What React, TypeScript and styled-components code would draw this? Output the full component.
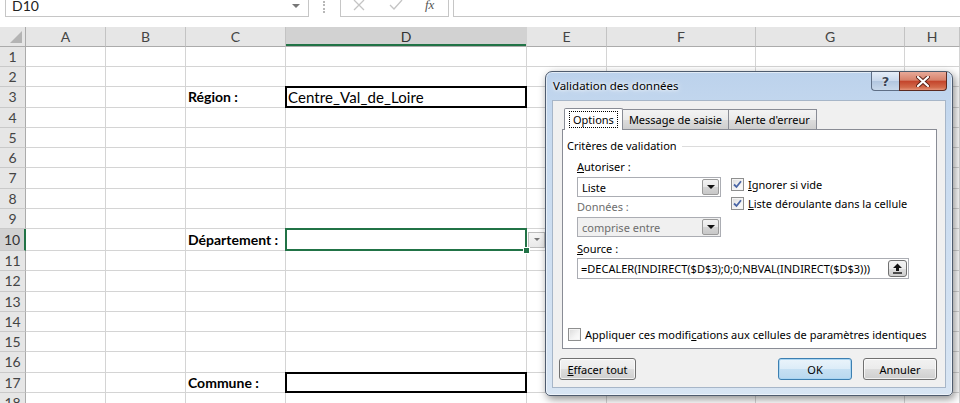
import React from "react";
import styled, { createGlobalStyle, css } from "styled-components";

const sheetFont = `"Lato", "Liberation Sans", sans-serif`;
const uiFont = `"Noto Sans", "Liberation Sans", sans-serif`;

const GlobalStyle = createGlobalStyle`
  html, body {
    margin: 0;
    padding: 0;
    background: #fff;
  }
  body {
    overflow: hidden;
  }
  #root {
    width: 960px;
    height: 403px;
  }
`;

type Column = { id: string; selected?: boolean };

const columns: Column[] = [
  { id: "A" },
  { id: "B" },
  { id: "C" },
  { id: "D", selected: true },
  { id: "E" },
  { id: "F" },
  { id: "G" },
  { id: "H" },
];

type Row = {
  n: number;
  height: number;
  label?: string;
  value?: string;
  frame?: "box" | "active";
};

const rows: Row[] = [
  { n: 1, height: 20 },
  { n: 2, height: 20.25 },
  { n: 3, height: 20.25, label: "Région :", value: "Centre_Val_de_Loire", frame: "box" },
  { n: 4, height: 20.25 },
  { n: 5, height: 20.25 },
  { n: 6, height: 20.25 },
  { n: 7, height: 20.25 },
  { n: 8, height: 20.25 },
  { n: 9, height: 20.25 },
  { n: 10, height: 22, label: "Département :", frame: "active" },
  { n: 11, height: 20.25 },
  { n: 12, height: 20.25 },
  { n: 13, height: 20.25 },
  { n: 14, height: 20.25 },
  { n: 15, height: 20.25 },
  { n: 16, height: 20.25 },
  { n: 17, height: 20.25, label: "Commune :", frame: "box" },
  { n: 18, height: 20.25 },
];

export default function App() {
  return (
    <Screen>
      <GlobalStyle />
      <FormulaBar>
        <NameBox>
          D10
          <NameArrow />
        </NameBox>
        <Grip />
        <FnBox>
          <svg width="12" height="12" viewBox="0 0 12 12">
            <path d="M1 1 L11 11 M11 1 L1 11" stroke="#c4c4c4" strokeWidth="1.3" />
          </svg>
          <svg width="14" height="12" viewBox="0 0 14 12">
            <path d="M1 6 L5 10 L13 1" stroke="#c4c4c4" strokeWidth="1.3" fill="none" />
          </svg>
          <Fx>fx</Fx>
        </FnBox>
        <FormulaInput />
      </FormulaBar>

      <Sheet>
        <Corner />
        {columns.map((c) => (
          <ColHeader key={c.id} $selected={c.selected}>
            {c.id}
          </ColHeader>
        ))}
        {rows.map((r) => (
          <React.Fragment key={r.n}>
            <RowHeader style={{ height: r.height }} $selected={r.frame === "active"}>
              {r.n}
            </RowHeader>
            <Cell />
            <Cell />
            <Cell $bold>{r.label}</Cell>
            <Cell $frame={r.frame}>{r.value}</Cell>
            <Cell>{r.frame === "active" && <CellDropButton />}</Cell>
            <Cell />
            <Cell />
            <Cell />
          </React.Fragment>
        ))}
      </Sheet>

      <Dialog>
        <TitleBar>
          <Title>Validation des données</Title>
          <CaptionButtons>
            <HelpButton>?</HelpButton>
            <CloseButton>
              <svg width="14" height="11" viewBox="0 0 14 11">
                <path
                  d="M2 1 L12 10 M12 1 L2 10"
                  stroke="#5a2116"
                  strokeWidth="4"
                  strokeLinecap="round"
                />
                <path
                  d="M2 1 L12 10 M12 1 L2 10"
                  stroke="#fff"
                  strokeWidth="2.2"
                  strokeLinecap="round"
                />
              </svg>
            </CloseButton>
          </CaptionButtons>
        </TitleBar>

        <Client>
          <TabList>
            <Tab $active>
              <FocusText>Options</FocusText>
            </Tab>
            <Tab>Message de saisie</Tab>
            <Tab>Alerte d'erreur</Tab>
          </TabList>

          <Panel>
            <GroupHeader>
              <span>Critères de validation</span>
              <GroupLine />
            </GroupHeader>

            <Criteria>
              <LeftColumn>
                <FieldLabel>
                  <Accel>A</Accel>utoriser :
                </FieldLabel>
                <Combo>
                  <span>Liste</span>
                  <ComboButton />
                </Combo>
                <FieldLabel $disabled>Données :</FieldLabel>
                <Combo $disabled>
                  <span>comprise entre</span>
                  <ComboButton />
                </Combo>
              </LeftColumn>
              <RightColumn>
                <CheckRow>
                  <CheckBox checked />
                  <span>
                    <Accel>I</Accel>gnorer si vide
                  </span>
                </CheckRow>
                <CheckRow>
                  <CheckBox checked />
                  <span>
                    <Accel>L</Accel>iste déroulante dans la cellule
                  </span>
                </CheckRow>
              </RightColumn>
            </Criteria>

            <SourceBlock>
              <FieldLabel>
                <Accel>S</Accel>ource :
              </FieldLabel>
              <SourceInput>
                <span>=DECALER(INDIRECT($D$3);0;0;NBVAL(INDIRECT($D$3)))</span>
                <CollapseButton>
                  <svg width="11" height="11" viewBox="0 0 11 11">
                    <path d="M5.5 0.5 L10 5 L7 5 L7 8 L4 8 L4 5 L1 5 Z" fill="#111" />
                    <rect x="1" y="9.3" width="9" height="1.4" fill="#111" />
                  </svg>
                </CollapseButton>
              </SourceInput>
            </SourceBlock>

            <ApplyRow>
              <CheckBox />
              <span>
                Appliquer ces modifi<Accel>c</Accel>ations aux cellules de paramètres identiques
              </span>
            </ApplyRow>
          </Panel>

          <ButtonRow>
            <PushButton $width={77}>
              <Accel>E</Accel>ffacer tout
            </PushButton>
            <Spacer />
            <PushButton $width={74} $default>
              OK
            </PushButton>
            <PushButton $width={74}>Annuler</PushButton>
          </ButtonRow>
        </Client>
      </Dialog>
    </Screen>
  );
}

function CheckBox({ checked }: { checked?: boolean }) {
  return (
    <CheckFrame>
      {checked && (
        <svg width="9" height="9" viewBox="0 0 9 9">
          <path d="M1 4.5 L3.5 7 L8 1.2" stroke="#4a66a6" strokeWidth="1.8" fill="none" />
        </svg>
      )}
    </CheckFrame>
  );
}

const Screen = styled.div`
  position: relative;
  width: 960px;
  height: 403px;
  overflow: hidden;
  background: #fff;
  font-family: ${sheetFont};
`;

/* ---------- formula bar ---------- */

const FormulaBar = styled.div`
  height: 27px;
  display: flex;
  align-items: flex-start;
  background: #fff;
`;

const NameBox = styled.div`
  position: relative;
  box-sizing: border-box;
  margin: -7px 0 0 5px;
  width: 304px;
  height: 24px;
  border: 1px solid #c6c6c6;
  display: flex;
  align-items: center;
  padding-left: 6px;
  font-size: 14px;
  color: #222;
`;

const NameArrow = styled.span`
  position: absolute;
  right: 8px;
  top: 10px;
  border-left: 4px solid transparent;
  border-right: 4px solid transparent;
  border-top: 4px solid #777;
`;

const Grip = styled.div`
  margin: 1px 0 0 14px;
  width: 0;
  height: 12px;
  border-left: 2px dotted #b8b8b8;
`;

const FnBox = styled.div`
  box-sizing: border-box;
  margin: -7px 0 0 15px;
  width: 109px;
  height: 24px;
  border: 1px solid #c6c6c6;
  display: flex;
  align-items: center;
  padding: 0 0 0 12px;
  gap: 24px;
`;

const Fx = styled.span`
  font-family: "Liberation Serif", serif;
  font-style: italic;
  font-size: 13px;
  color: #555;
  margin-left: -2px;
`;

const FormulaInput = styled.div`
  box-sizing: border-box;
  margin: -7px 0 0 4px;
  flex: 1;
  height: 24px;
  border: 1px solid #c6c6c6;
  border-right: none;
`;

/* ---------- sheet ---------- */

const Sheet = styled.div`
  display: grid;
  grid-template-columns: 26px 80px 80px 100px 241px 80px 149px 149px 1fr;
  grid-auto-rows: auto;
`;

const Corner = styled.div`
  position: relative;
  height: 20px;
  box-sizing: border-box;
  background: #e6e6e6;
  border-right: 1px solid #ababab;
  border-bottom: 1px solid #ababab;

  &::after {
    content: "";
    position: absolute;
    right: 3px;
    bottom: 3px;
    border-left: 12px solid transparent;
    border-bottom: 12px solid #b4b4b4;
  }
`;

const ColHeader = styled.div<{ $selected?: boolean }>`
  box-sizing: border-box;
  height: 20px;
  background: #e6e6e6;
  border-right: 1px solid #c3c3c3;
  border-bottom: 1px solid #ababab;
  display: flex;
  align-items: center;
  justify-content: center;
  font-size: 14px;
  color: #444;
  ${(p) =>
    p.$selected &&
    css`
      background: #d2d2d2;
      color: #333;
      border-right-color: #d2d2d2;
      box-shadow: inset 0 -2px 0 #217346;
    `}
`;

const RowHeader = styled.div<{ $selected?: boolean }>`
  box-sizing: border-box;
  background: #e6e6e6;
  border-right: 1px solid #ababab;
  border-bottom: 1px solid #c9c9c9;
  display: flex;
  align-items: center;
  justify-content: center;
  font-size: 14px;
  color: #444;
  ${(p) =>
    p.$selected &&
    css`
      background: #d2d2d2;
      color: #333;
      border-right: 2px solid #217346;
    `}
`;

const Cell = styled.div<{ $bold?: boolean; $frame?: "box" | "active" }>`
  position: relative;
  box-sizing: border-box;
  border-right: 1px solid #d4d4d4;
  border-bottom: 1px solid #d4d4d4;
  display: flex;
  align-items: center;
  padding: 0 2px;
  font-size: ${(p) => (p.$bold ? "14px" : "15px")};
  letter-spacing: ${(p) => (p.$bold ? "0" : "0.1px")};
  color: #000;
  white-space: nowrap;
  font-weight: ${(p) => (p.$bold ? 700 : 400)};

  ${(p) =>
    p.$frame &&
    css`
      &::after {
        content: "";
        position: absolute;
        left: -1px;
        top: -1px;
        right: -1px;
        bottom: -1px;
        border: 2px solid ${p.$frame === "box" ? "#000" : "#217346"};
        z-index: 2;
        pointer-events: none;
      }
    `}

  ${(p) =>
    p.$frame === "active" &&
    css`
      &::before {
        content: "";
        position: absolute;
        right: -4px;
        bottom: -4px;
        width: 5px;
        height: 5px;
        background: #217346;
        border: 1px solid #fff;
        z-index: 3;
      }
    `}
`;

const CellDropButton = styled.div`
  box-sizing: border-box;
  margin-left: -1px;
  width: 17px;
  height: 16px;
  border: 1px solid #bdbdbd;
  background: linear-gradient(180deg, #f7f7f7, #e9e9e9);
  display: flex;
  align-items: center;
  justify-content: center;

  &::after {
    content: "";
    border-left: 3px solid transparent;
    border-right: 3px solid transparent;
    border-top: 3px solid #777;
  }
`;

/* ---------- dialog ---------- */

const Dialog = styled.div`
  position: absolute;
  left: 545px;
  top: 71px;
  width: 408px;
  height: 325px;
  box-sizing: border-box;
  border: 1px solid #4f5c6e;
  border-radius: 7px 7px 5px 5px;
  background: linear-gradient(180deg, #bcd2ec 0%, #c7daef 18%, #cfdff1 60%, #d8e5f3 100%);
  box-shadow: inset 0 0 0 1px rgba(255, 255, 255, 0.55), 2px 3px 9px rgba(0, 0, 0, 0.45);
  padding: 0 6px;
  display: flex;
  flex-direction: column;
  font-family: ${uiFont};
  font-size: 11px;
  color: #000;
`;

const TitleBar = styled.div`
  height: 28px;
  display: flex;
  align-items: flex-start;
`;

const Title = styled.div`
  padding: 6px 0 0 1px;
  line-height: 16px;
  font-size: 11.5px;
  text-shadow: 0 0 6px #fff, 0 0 3px #fff;
`;

const CaptionButtons = styled.div`
  margin: 0 -1px 0 auto;
  display: flex;
  height: 19px;
`;

const HelpButton = styled.div`
  box-sizing: border-box;
  width: 28px;
  height: 19px;
  border: 1px solid #5f6f86;
  border-top: none;
  border-right: none;
  border-radius: 0 0 0 4px;
  background: linear-gradient(180deg, #e6eef8 0%, #c9d8ec 48%, #b2c6df 52%, #c8d8ea 100%);
  display: flex;
  align-items: center;
  justify-content: center;
  font-family: "DejaVu Sans", sans-serif;
  font-weight: 700;
  font-size: 13px;
  color: #3a4454;
  text-shadow: 0 0 2px #fff;
`;

const CloseButton = styled.div`
  box-sizing: border-box;
  width: 48px;
  height: 19px;
  border: 1px solid #5b2a20;
  border-top: none;
  border-radius: 0 0 4px 0;
  background: linear-gradient(180deg, #e7a998 0%, #d7826c 45%, #c4452c 52%, #d26a4b 85%, #e4947a 100%);
  display: flex;
  align-items: center;
  justify-content: center;
`;

const Client = styled.div`
  box-sizing: border-box;
  height: 288px;
  background: #f0f0f0;
  border: 1px solid #a7b6c8;
  display: flex;
  flex-direction: column;
  padding-top: 7px;
`;

const TabList = styled.div`
  display: flex;
  align-items: flex-end;
  height: 22px;
  margin: 0 0 -1px 11px;
  position: relative;
  z-index: 1;
`;

const Tab = styled.div<{ $active?: boolean }>`
  box-sizing: border-box;
  height: 20px;
  margin-bottom: 1px;
  padding: 0 6px;
  border: 1px solid #898c95;
  border-bottom: none;
  border-left-width: 0;
  background: linear-gradient(180deg, #f3f3f3 0%, #ebebeb 50%, #dddddd 51%, #cfcfcf 100%);
  display: flex;
  align-items: center;
  white-space: nowrap;

  ${(p) =>
    p.$active &&
    css`
      height: 22px;
      margin-bottom: 0;
      border-left-width: 1px;
      border-radius: 2px 2px 0 0;
      background: #fff;
      padding: 0 4px;
    `}
`;

const FocusText = styled.span`
  border: 1px dotted #000;
  padding: 0 3px;
  line-height: 15px;
`;

const Panel = styled.div`
  box-sizing: border-box;
  margin: 0 8px 0 9px;
  height: 220px;
  background: #fff;
  border: 1px solid #898c95;
  display: flex;
  flex-direction: column;
  padding: 8px 6px 6px 4px;
`;

const GroupHeader = styled.div`
  display: flex;
  align-items: center;
  gap: 5px;
  height: 16px;
  line-height: 16px;
`;

const GroupLine = styled.div`
  flex: 1;
  height: 1px;
  background: #dcdcdc;
`;

const Criteria = styled.div`
  display: flex;
  margin: 5px 0 0 10px;
`;

const LeftColumn = styled.div`
  width: 144px;
  display: flex;
  flex-direction: column;
`;

const FieldLabel = styled.div<{ $disabled?: boolean }>`
  height: 16px;
  line-height: 16px;
  color: ${(p) => (p.$disabled ? "#6d6d6d" : "#000")};
  & + div {
    margin-top: 2px;
  }
`;

const Combo = styled.div<{ $disabled?: boolean }>`
  box-sizing: border-box;
  height: 20px;
  border: 1px solid #abadb3;
  background: ${(p) => (p.$disabled ? "#f0f0f0" : "#fff")};
  color: ${(p) => (p.$disabled ? "#6d6d6d" : "#000")};
  display: flex;
  align-items: center;
  padding: 0 1px 0 4px;
  & + div {
    margin-top: 2px;
  }
  & > span {
    flex: 1;
  }
`;

const ComboButton = styled.div`
  box-sizing: border-box;
  width: 17px;
  height: 16px;
  border: 1px solid #9a9a9a;
  border-radius: 2px;
  background: linear-gradient(180deg, #f2f2f2 0%, #e8e8e8 50%, #d4d4d4 51%, #c8c8c8 100%);
  display: flex;
  align-items: center;
  justify-content: center;

  &::after {
    content: "";
    border-left: 4px solid transparent;
    border-right: 4px solid transparent;
    border-top: 4px solid #111;
  }
`;

const RightColumn = styled.div`
  margin-left: 10px;
  padding-top: 16px;
  display: flex;
  flex-direction: column;
  gap: 1px;
`;

const CheckRow = styled.div`
  height: 18px;
  display: flex;
  align-items: center;
  gap: 4px;
  white-space: nowrap;
`;

const CheckFrame = styled.span`
  box-sizing: border-box;
  width: 13px;
  height: 13px;
  flex: none;
  border: 1px solid #8e8f8f;
  background: linear-gradient(135deg, #dadada 0%, #f4f4f4 60%, #fdfdfd 100%);
  box-shadow: inset 0 0 0 1px #f4f4f4;
  display: inline-flex;
  align-items: center;
  justify-content: center;
`;

const SourceBlock = styled.div`
  margin: 4px 0 0 10px;
  display: flex;
  flex-direction: column;
  & > div + div {
    margin-top: 1px;
  }
`;

const SourceInput = styled.div`
  box-sizing: border-box;
  width: 332px;
  height: 21px;
  border: 1px solid #abadb3;
  display: flex;
  align-items: center;
  padding: 0 1px 0 3px;
  white-space: nowrap;
  & > span {
    flex: 1;
    overflow: hidden;
  }
`;

const CollapseButton = styled.div`
  box-sizing: border-box;
  width: 19px;
  height: 17px;
  border: 1px solid #707070;
  border-radius: 3px;
  background: linear-gradient(180deg, #f2f2f2 0%, #ebebeb 50%, #dddddd 51%, #cfcfcf 100%);
  display: flex;
  align-items: center;
  justify-content: center;
`;

const ApplyRow = styled.div`
  margin: auto 0 0 1px;
  height: 16px;
  display: flex;
  align-items: center;
  gap: 4px;
  white-space: nowrap;
`;

const ButtonRow = styled.div`
  display: flex;
  gap: 11px;
  margin-top: 9px;
  padding: 0 8px 0 6px;
`;

const Spacer = styled.div`
  flex: 1;
`;

const PushButton = styled.div<{ $width: number; $default?: boolean }>`
  box-sizing: border-box;
  width: ${(p) => p.$width}px;
  height: 22px;
  border: 1px solid #707070;
  border-radius: 3px;
  background: linear-gradient(180deg, #f2f2f2 0%, #ebebeb 50%, #dddddd 51%, #cfcfcf 100%);
  box-shadow: inset 0 0 0 1px rgba(255, 255, 255, 0.7);
  display: flex;
  align-items: center;
  justify-content: center;
  white-space: nowrap;

  ${(p) =>
    p.$default &&
    css`
      border-color: #3c7fb1;
      background: linear-gradient(180deg, #eaf4fb 0%, #dcecf8 50%, #c6e0f3 51%, #b9d8ef 100%);
      box-shadow: inset 0 0 0 1px #a9d5f2;
    `}
`;

const Accel = styled.span`
  text-decoration: underline;
  text-underline-offset: 1px;
`;
